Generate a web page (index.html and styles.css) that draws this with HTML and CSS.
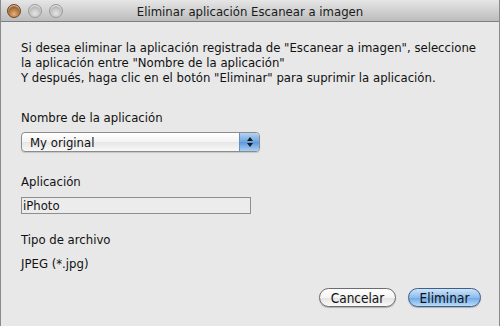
FILE: index.html
```html
<!DOCTYPE html>
<html>
<head>
    <title>Eliminar aplicación Escanear a imagen</title>
    <link rel="stylesheet" href="styles.css">
</head>
<body>
<div id="window">
    <div id="titlebar">
        <div class="lights">
            <span class="light close"></span>
            <span class="light"></span>
            <span class="light"></span>
        </div>
        <div class="title">Eliminar aplicación Escanear a imagen</div>
    </div>
    <div id="content">
        <p class="intro">Si desea eliminar la aplicación registrada de "Escanear a imagen", seleccione<br>la aplicación entre "Nombre de la aplicación"<br>Y después, haga clic en el botón "Eliminar" para suprimir la aplicación.</p>

        <div class="label first">Nombre de la aplicación</div>
        <div class="popup">
            <span class="popup-text">My original</span>
            <span class="popup-arrows">
                <svg width="8" height="12" viewBox="0 0 8 12">
                    <path d="M4 1 L7 5 L1 5 Z" fill="#1a1a1a"/>
                    <path d="M4 11 L7 7 L1 7 Z" fill="#1a1a1a"/>
                </svg>
            </span>
        </div>

        <div class="label app">Aplicación</div>
        <div class="field">iPhoto</div>

        <div class="label type">Tipo de archivo</div>
        <div class="value">JPEG (*.jpg)</div>

        <div class="buttons">
            <button class="btn cancel">Cancelar</button>
            <button class="btn default">Eliminar</button>
        </div>
    </div>
</div>
</body>
</html>
```

FILE: styles.css
```css
* {
    padding: 0;
    margin: 0;
    box-sizing: border-box;
}

body {
    width: 500px;
    height: 326px;
    overflow: hidden;
    font-family: "DejaVu Sans Condensed", "DejaVu Sans", sans-serif;
    font-stretch: condensed;
    font-size: 13px;
    color: #111;
}

#window {
    width: 500px;
    height: 326px;
    background-color: #e8e8e8;
    border-left: 1px solid #8a8a8a;
    border-right: 1px solid #8a8a8a;
    display: flex;
    flex-direction: column;
}

#titlebar {
    position: relative;
    height: 22px;
    background: linear-gradient(#e6e6e6, #bcbcbc);
    border-bottom: 1px solid #7e7e7e;
    display: flex;
    align-items: center;
    justify-content: center;
}

.lights {
    position: absolute;
    left: 6px;
    top: 4px;
    display: flex;
    gap: 7px;
}

.light {
    width: 14px;
    height: 14px;
    border-radius: 50%;
    background: radial-gradient(circle at 50% 70%, #e6e6e6, #b2b2b2 70%);
    border: 1px solid #9a9a9a;
    box-shadow: inset 0 1px 1px rgba(255, 255, 255, 0.8);
}

.light.close {
    background: radial-gradient(circle at 50% 75%, #e8b27a, #a0652e 60%, #6a3f1c);
    border-color: #6e4522;
}

.title {
    font-size: 13px;
    color: #1a1a1a;
    padding-top: 1px;
}

#content {
    padding: 18px 20px 0 20px;
    display: flex;
    flex-direction: column;
    flex: 1;
}

.intro {
    line-height: 15px;
    white-space: nowrap;
}

.label {
    line-height: 15px;
}

.label.first {
    margin-top: 25px;
}

.label.app {
    margin-top: 22px;
}

.label.type {
    margin-top: 18px;
}

.popup {
    margin-top: 7px;
    width: 239px;
    height: 20px;
    border: 1px solid #8c8c8c;
    border-radius: 4px;
    background: linear-gradient(#ffffff, #f3f3f3 50%, #e6e6e6 51%, #f8f8f8);
    display: flex;
    align-items: center;
    overflow: hidden;
    box-shadow: 0 1px 1px rgba(0, 0, 0, 0.15);
}

.popup-text {
    flex: 1;
    padding-left: 8px;
}

.popup-arrows {
    width: 20px;
    height: 100%;
    background: linear-gradient(#b4d3f3, #6ea4df 50%, #5b98dc 51%, #a9d0f5);
    border-left: 1px solid #6a8fbf;
    display: flex;
    align-items: center;
    justify-content: center;
}

.field {
    margin-top: 8px;
    width: 230px;
    height: 17px;
    border: 1px solid #8e8e8e;
    background-color: #ececec;
    line-height: 15px;
    padding-left: 1px;
}

.value {
    margin-top: 9px;
    line-height: 15px;
}

.buttons {
    margin-top: 17px;
    display: flex;
    justify-content: flex-end;
    gap: 12px;
}

.btn {
    height: 19px;
    border-radius: 10px;
    border: 1px solid #6c6c6c;
    background: linear-gradient(#ffffff, #f4f4f4 50%, #e2e2e2 51%, #fafafa);
    font-family: "DejaVu Sans Condensed", "DejaVu Sans", sans-serif;
    font-stretch: condensed;
    font-size: 13.5px;
    color: #111;
    box-shadow: 0 1px 1px rgba(0, 0, 0, 0.25);
}

.btn.cancel {
    width: 77px;
}

.btn.default {
    width: 73px;
    margin-right: -2px;
    border-color: #3e5f8c;
    background: linear-gradient(#cfe4f9, #8dbcee 50%, #6ea6e6 51%, #b8dcfb);
}
```
